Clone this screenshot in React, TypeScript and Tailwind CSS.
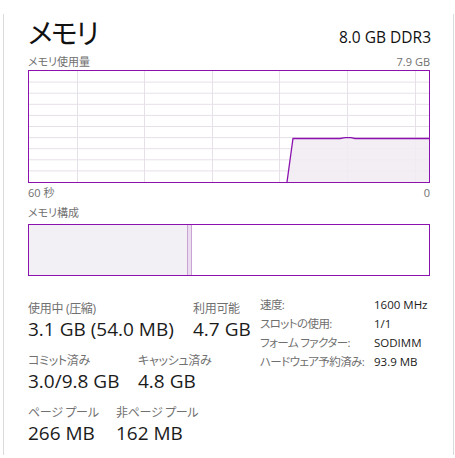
import React from 'react';

const FONT = "font-['Open_Sans','Noto_Sans_CJK_JP',sans-serif] [font-feature-settings:'palt']";

const PURPLE = '#8b12ae';

function UsageGraph() {
  const w = 400;
  const h = 111;
  const vLines = [48, 115, 183, 250, 318, 386];
  const hLines = Array.from({ length: 9 }).map((_, i) => ((i + 1) * h) / 10);
  const pts = '258,111 264,67.5 311,67.5 316,66.6 322,66.6 326,67.5 400,67.5';
  return (
    <div className="border border-[#8b12ae] w-[402px] h-[113px]">
      <svg width={w} height={h} className="block">
        {hLines.map((y, i) => (
          <line key={'h' + i} x1={0} x2={w} y1={y} y2={y} stroke="#e6e0e8" strokeWidth={1} />
        ))}
        {vLines.map((x, i) => (
          <line key={'v' + i} x1={x + 0.5} x2={x + 0.5} y1={0} y2={h} stroke="#e6e0e8" strokeWidth={1} />
        ))}
        <polygon points={`${pts} 400,111`} fill="#f1ecf3" fillOpacity={0.9} />
        <polyline points={pts} fill="none" stroke={PURPLE} strokeWidth={1.3} />
      </svg>
    </div>
  );
}

function Composition() {
  return (
    <div className="border border-[#8b12ae] w-[402px] h-[52px] flex">
      <div className="w-[158px] bg-[#f3f0f5]" />
      <div className="w-[5px] bg-[#ecdcf0] border-l border-r border-[#c9a3d4]" />
      <div className="flex-1 bg-white" />
    </div>
  );
}

function Stat({ label, value, className = '' }: { label: string; value: string; className?: string }) {
  return (
    <div className={`flex flex-col ${className}`}>
      <div className="text-[12px] leading-[16px] text-[#707070] tracking-[-0.3px]">{label}</div>
      <div className="text-[19px] leading-[26px] text-[#1b1b1b] -mt-[1px]">{value}</div>
    </div>
  );
}

const specs: [string, string][] = [
  ['速度:', '1600 MHz'],
  ['スロットの使用:', '1/1'],
  ['フォーム ファクター:', 'SODIMM'],
  ['ハードウェア予約済み:', '93.9 MB'],
];

export default function App() {
  return (
    <div className={`w-[455px] h-[458px] bg-white pt-[17px] pl-[3px] pr-[1px] ${FONT}`}>
      <div className="h-full border-l border-r border-[#dadada] pl-[24px] pr-[22px]">
        <div className="flex items-end justify-between -mt-[3px]">
          <div className="text-[28px] leading-[38px] text-[#111] tracking-[-1.5px]">メモリ</div>
          <div className="text-[15.5px] leading-[22px] text-[#111] mb-[4px]">8.0 GB DDR3</div>
        </div>
        <div className="flex justify-between text-[11px] leading-[14px] text-[#707070] mt-[3px] w-[402px]">
          <span>メモリ使用量</span>
          <span>7.9 GB</span>
        </div>
        <div className="mt-[1px]">
          <UsageGraph />
        </div>
        <div className="flex justify-between text-[11px] leading-[14px] text-[#707070] mt-[3px] w-[402px]">
          <span>60 秒</span>
          <span>0</span>
        </div>
        <div className="text-[11px] leading-[14px] text-[#707070] mt-[6px]">メモリ構成</div>
        <div className="mt-[4px]">
          <Composition />
        </div>
        <div className="flex items-start mt-[25px]">
          <div className="flex flex-col w-[232px] gap-[11px]">
            <div className="flex">
              <Stat label="使用中 (圧縮)" value="3.1 GB (54.0 MB)" className="w-[165px]" />
              <Stat label="利用可能" value="4.7 GB" />
            </div>
            <div className="flex">
              <Stat label="コミット済み" value="3.0/9.8 GB" className="w-[110px]" />
              <Stat label="キャッシュ済み" value="4.8 GB" />
            </div>
            <div className="flex">
              <Stat label="ページ プール" value="266 MB" className="w-[88px]" />
              <Stat label="非ページ プール" value="162 MB" />
            </div>
          </div>
          <div className="grid grid-cols-[114px_auto] text-[11.5px] leading-[19px] -mt-[6px]">
            {specs.map(([k, v]) => (
              <React.Fragment key={k}>
                <span className="text-[#707070] whitespace-nowrap tracking-[-0.6px]">{k}</span>
                <span className="text-[#1b1b1b] whitespace-nowrap">{v}</span>
              </React.Fragment>
            ))}
          </div>
        </div>
      </div>
    </div>
  );
}
